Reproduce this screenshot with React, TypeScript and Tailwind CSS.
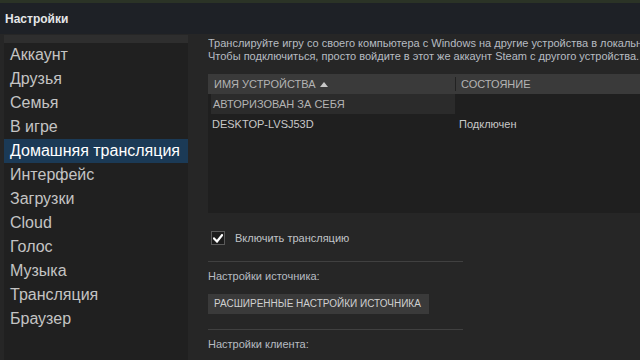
/**
 * Steam settings — "Домашняя трансляция" page.
 */

const menu = [
  "Аккаунт",
  "Друзья",
  "Семья",
  "В игре",
  "Домашняя трансляция",
  "Интерфейс",
  "Загрузки",
  "Cloud",
  "Голос",
  "Музыка",
  "Трансляция",
  "Браузер",
];

const ACTIVE = "Домашняя трансляция";

export default function App() {
  return (
    <div
      className="flex h-[360px] w-[640px] flex-col overflow-hidden bg-[#262626]"
      style={{ fontFamily: '"Liberation Sans", Arial, sans-serif' }}
    >
      {/* Game backdrop strip */}
      <div className="h-[3px] bg-[#2b3326]" />

      {/* Title bar */}
      <div className="flex h-[31px] items-center bg-[#1e2126] px-[5px]">
        <span className="text-[12px] font-bold text-[#e4e6e8]">Настройки</span>
      </div>

      <div className="flex min-h-0 flex-1">
        {/* Sidebar */}
        <nav className="ml-[4px] mt-[1px] flex w-[184px] flex-col bg-[#202020]">
          <div className="h-[8px] bg-[#2e2e2e]" />
          <ul>
            {menu.map((item) => (
              <li
                key={item}
                className={`flex h-[24px] items-center pl-[6px] text-[16px] ${
                  item === ACTIVE ? "bg-[#1b3a56] text-white" : "text-[#c4c4c4]"
                }`}
              >
                {item}
              </li>
            ))}
          </ul>
        </nav>

        {/* Content */}
        <main className="ml-[20px] flex min-w-0 flex-1 flex-col overflow-hidden pt-[3px] text-[11px] text-[#b7bcc2]">
          <p className="whitespace-nowrap leading-[13px]">
            Транслируйте игру со своего компьютера с Windows на другие устройства в локальной сети.
          </p>
          <p className="whitespace-nowrap leading-[13px]">
            Чтобы подключиться, просто войдите в этот же аккаунт Steam с другого устройства.
          </p>

          {/* Device table */}
          <div className="mt-[11px] flex h-[139px] flex-col bg-[#1f1f1f]">
            <div className="flex h-[20px] items-center bg-[#3a3a3a] text-[#b4b4b4]">
              <div className="flex w-[247px] items-center gap-[4px] pl-[6px]">
                ИМЯ УСТРОЙСТВА
                <svg width="8" height="5" viewBox="0 0 8 5" className="fill-[#c8c8c8]">
                  <path d="M0 5 L4 0 L8 5 Z" />
                </svg>
              </div>
              <div className="h-[14px] w-px bg-[#222]" />
              <div className="pl-[5px]">СОСТОЯНИЕ</div>
            </div>
            <div className="flex h-[20px] items-center">
              <div className="ml-[3px] flex h-full w-[244px] items-center bg-[#2b2b2b] pl-[2px] text-[#b4b4b4]">
                АВТОРИЗОВАН ЗА СЕБЯ
              </div>
            </div>
            <div className="flex h-[20px] items-center text-[#c8c8c8]">
              <div className="w-[251px] pl-[4px]">DESKTOP-LVSJ53D</div>
              <div>Подключен</div>
            </div>
          </div>

          {/* Enable */}
          <label className="mt-[17px] flex items-center gap-[10px] pl-[3px] text-[#c0c4c8]">
            <span className="flex h-[14px] w-[14px] items-center justify-center border border-[#5a5a5a] bg-[#1c1c1c]">
              <svg width="10" height="9" viewBox="0 0 10 9" fill="none">
                <path d="M1 4.5 L4 7.5 L9 1.2" stroke="white" strokeWidth="2.2" strokeLinecap="square" />
              </svg>
            </span>
            Включить трансляцию
          </label>

          <div className="mt-[14px] h-px w-[255px] bg-[#404040]" />
          <p className="mt-[8px] leading-[13px] text-[#b7bcc2]">Настройки источника:</p>
          <button className="mt-[11px] flex h-[20px] w-[221px] items-center whitespace-nowrap bg-[#3a3a3a] pl-[6px] text-left text-[10px] text-[#d0d0d0]">
            РАСШИРЕННЫЕ НАСТРОЙКИ ИСТОЧНИКА
          </button>
          <div className="mt-[15px] h-px w-[255px] bg-[#404040]" />
          <p className="mt-[8px] leading-[13px] text-[#b7bcc2]">Настройки клиента:</p>
        </main>
      </div>
    </div>
  );
}
